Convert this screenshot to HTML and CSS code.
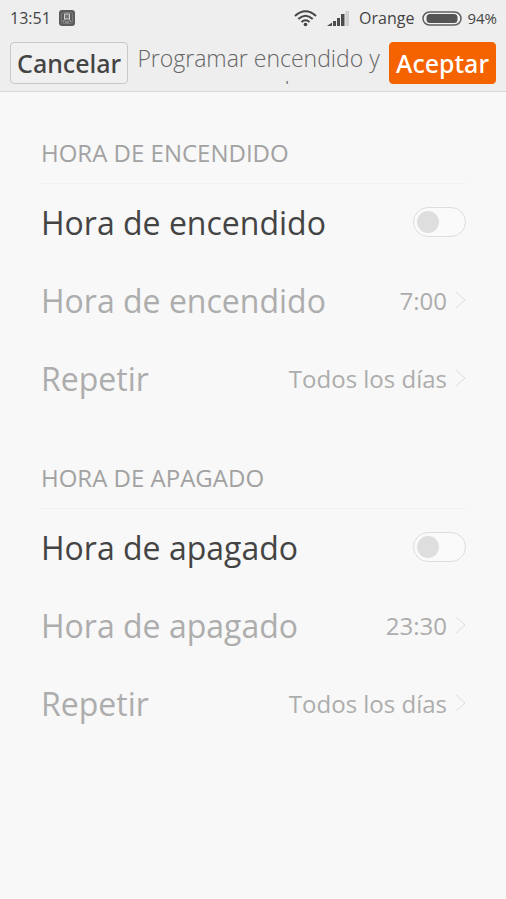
FILE: index.html
```html
<!DOCTYPE html>
<html lang="es">
<head>
<meta charset="utf-8">
<meta name="viewport" content="width=device-width, initial-scale=1">
<title>Programar encendido y apagado</title>
<link rel="stylesheet" href="styles.css">
</head>
<body>
<header class="top">
  <div class="status">
    <span>13:51</span>
    <svg class="app-icon" width="16" height="16" viewBox="0 0 16 16" aria-hidden="true">
      <rect width="16" height="16" rx="3" fill="#5c5c5c"/>
      <rect x="2.500" y="2.500" width="11" height="11" rx="2" fill="none" stroke="#7c7c7c"/>
      <path d="M5.500 4h5v5h-5z" fill="#777" stroke="#d0d0d0"/>
      <path d="M6 9l-2 3M10 9l2 3M6 12h4" fill="none" stroke="#b4b4b4"/>
    </svg>
    <svg class="wifi" width="23" height="17" viewBox="0 0 23 17" fill="none" stroke="#444" stroke-width="2" aria-hidden="true">
      <path d="M1 6Q11.500-3.500 22 6"/>
      <path d="M4.300 9Q11.500 2.500 18.700 9"/>
      <path d="M7.500 12Q11.500 8.500 15.500 12"/>
      <circle cx="11.500" cy="14.500" r="1.800" fill="#444" stroke="none"/>
    </svg>
    <svg class="signal" width="22" height="15" viewBox="0 0 22 15" fill="#4c4c4c" aria-hidden="true">
      <path d="M0 15l5-3.500V15zM6 10h3v5H6zM10 7h3v8h-3zM14 3h3.500v12H14z"/>
      <path d="M18.500 0H22v15h-3.500z" fill="#cfcfcf"/>
    </svg>
    <span class="carrier">Orange</span>
    <svg class="battery" width="40" height="15" viewBox="0 0 40 15" aria-hidden="true">
      <rect x="1" y="1" width="38" height="13" rx="6.500" fill="#f2f2f2" stroke="#606060" stroke-width="1.500"/>
      <rect x="4.500" y="3" width="31" height="9" rx="3.500" fill="#555"/>
    </svg>
    <span class="percent">94%</span>
  </div>
  <div class="bar">
    <button class="action" type="button">Cancelar</button>
    <h1 class="title">Programar encendido y apagado</h1>
    <button class="action primary" type="button">Aceptar</button>
  </div>
</header>
<main class="content">
  <section class="group">
    <h2 class="heading">HORA DE ENCENDIDO</h2>
    <label class="row" for="power-on"><span class="name">Hora de encendido</span><input class="switch" id="power-on" type="checkbox" role="switch"></label>
    <button class="row" type="button" disabled><span class="name">Hora de encendido</span><span class="value">7:00</span><svg class="chevron" width="11" height="18" viewBox="0 0 11 18" aria-hidden="true"><path d="M1 1l9 8-9 8"/></svg></button>
    <button class="row" type="button" disabled><span class="name">Repetir</span><span class="value">Todos los días</span><svg class="chevron" width="11" height="18" viewBox="0 0 11 18" aria-hidden="true"><path d="M1 1l9 8-9 8"/></svg></button>
  </section>
  <section class="group">
    <h2 class="heading">HORA DE APAGADO</h2>
    <label class="row" for="power-off"><span class="name">Hora de apagado</span><input class="switch" id="power-off" type="checkbox" role="switch"></label>
    <button class="row" type="button" disabled><span class="name">Hora de apagado</span><span class="value">23:30</span><svg class="chevron" width="11" height="18" viewBox="0 0 11 18" aria-hidden="true"><path d="M1 1l9 8-9 8"/></svg></button>
    <button class="row" type="button" disabled><span class="name">Repetir</span><span class="value">Todos los días</span><svg class="chevron" width="11" height="18" viewBox="0 0 11 18" aria-hidden="true"><path d="M1 1l9 8-9 8"/></svg></button>
  </section>
</main>
</body>
</html>
```
FILE: styles.css
```css
* {
  box-sizing: border-box;
}

body {
  margin: 0;
  background: #f8f8f8;
  color: #444;
  font-family: "Open Sans", "Noto Sans", sans-serif;
}

button {
  font-family: inherit;
}

.top {
  background: #eee;
  border-bottom: 1px solid #d8d8d8;
}

.status {
  display: flex;
  align-items: center;
  height: 36px;
  padding: 0 9px 0 10px;
  font-size: 16px;
}

.app-icon {
  margin-left: 8px;
}

.wifi {
  margin-left: auto;
}

.signal {
  margin-left: 10px;
}

.carrier {
  margin-left: 10px;
}

.battery {
  margin: 0 5px 0 8px;
}

.percent {
  font-size: 15px;
}

.bar {
  display: flex;
  align-items: flex-start;
  gap: 6px;
  padding: 6px 10px 7px;
}

.action {
  flex: none;
  height: 42px;
  padding: 0 6px;
  border: 1px solid #c8c8c8;
  border-radius: 4px;
  background: #f0f0f0;
  color: #444;
  font-family: "Noto Sans", sans-serif;
  font-size: 25px;
  font-weight: 500;
  line-height: 40px;
}

.primary {
  border-color: #f56200;
  background: #f56200;
  color: #fff;
}

.title {
  flex: 1;
  height: 42px;
  margin: 0;
  overflow: hidden;
  color: #666;
  font-size: 23px;
  font-weight: 300;
  line-height: 32px;
  text-align: center;
}

.content {
  padding: 31px 40px 0 41px;
}

.group {
  margin-bottom: 30px;
}

.heading {
  margin: 0;
  border-bottom: 1px solid #f1f1f1;
  color: #a2a2a2;
  font-size: 24px;
  font-weight: 400;
  line-height: 60px;
}

.row {
  display: flex;
  align-items: center;
  width: 100%;
  height: 78px;
  padding: 0 0 2px;
  border: 0;
  background: none;
  color: #444;
  text-align: left;
}

.row:disabled {
  color: #adadad;
}

.name {
  flex: 1;
  font-size: 32px;
}

.value {
  font-size: 24px;
}

.chevron {
  margin-left: 8px;
  fill: none;
  stroke: #ddd;
  stroke-width: 1;
}

.switch {
  display: flex;
  align-items: center;
  appearance: none;
  width: 53px;
  height: 30px;
  margin: 0;
  padding: 0 3px;
  border: 1px solid #ddd;
  border-radius: 15px;
  background: #fafafa;
}

.switch::before {
  content: "";
  width: 22px;
  height: 22px;
  border-radius: 50%;
  background: #dedede;
}

.switch:checked {
  justify-content: flex-end;
}

.switch:checked::before {
  background: #f56200;
}
```
